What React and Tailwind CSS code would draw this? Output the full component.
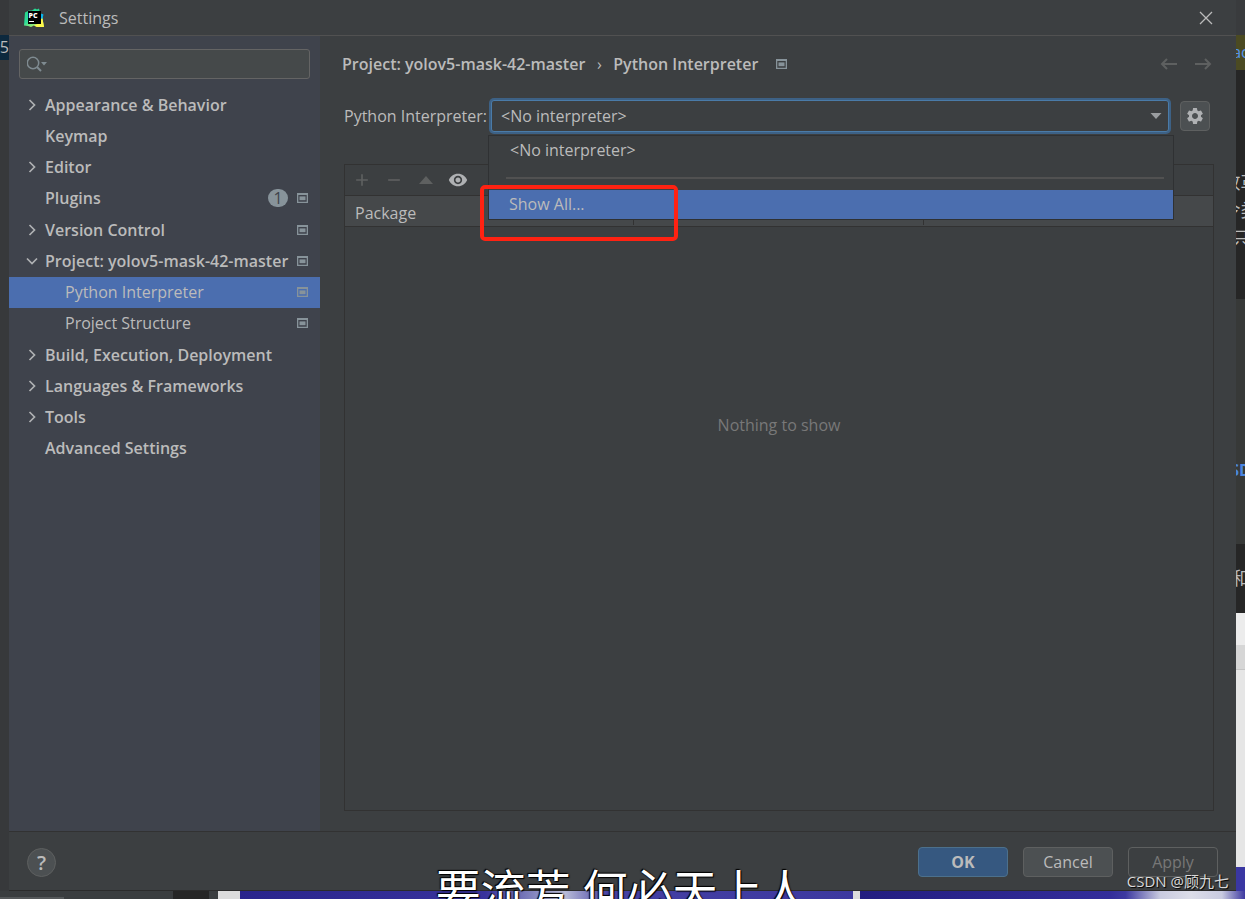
import { useState } from "react";
import { MdAdd, MdRemove, MdSettings, MdVisibility } from "react-icons/md";

const NAV_ITEMS = [
    { label: "Appearance & Behavior", arrow: "right" },
    { label: "Keymap" },
    { label: "Editor", arrow: "right" },
    { label: "Plugins", count: 1, project: true },
    { label: "Version Control", arrow: "right", project: true },
    { label: "Project: yolov5-mask-42-master", arrow: "down", project: true },
    { label: "Python Interpreter", child: true, project: true },
    { label: "Project Structure", child: true, project: true },
    { label: "Build, Execution, Deployment", arrow: "right" },
    { label: "Languages & Frameworks", arrow: "right" },
    { label: "Tools", arrow: "right" },
    { label: "Advanced Settings" },
];

function PyCharmLogo() {
    return (
        <svg viewBox="0 0 20 20" className="w-5 h-5 shrink-0" aria-hidden="true">
            <defs>
                <linearGradient id="pc-green" x1="0" y1="0" x2="0.6" y2="1">
                    <stop offset="0" stopColor="#21d789" />
                    <stop offset="0.6" stopColor="#2fdc9a" />
                    <stop offset="1" stopColor="#c8f060" />
                </linearGradient>
            </defs>
            <path d="M1 4.5 L5 2.5 L8 2.5 L11 0.5 L13 1.5 L15 0.5 L16 5 L19 6.5 L18.5 11 L20 19 L13 19 L10 17.5 L7 19 L4 18 L0 17.5 Z" fill="url(#pc-green)" />
            <path d="M16 5.5 L19.5 6.5 L18.3 11 L16 11 Z" fill="#07b3f2" />
            <path d="M16 11 L18.5 10.5 L20 19 L13 19 L10 17.5 L16 15 Z" fill="#fcf84a" />
            <rect x="4" y="3" width="13" height="13" fill="#000" />
            <text x="4.5" y="9.5" fontSize="7" fontWeight="800" fill="#fff" fontFamily="Open Sans, sans-serif">PC</text>
            <rect x="5" y="13" width="5" height="1" fill="#fff" />
        </svg>
    );
}

function ProjectIcon() {
    return (
        <svg viewBox="0 0 11 10" className="w-[11px] h-[10px] shrink-0" aria-hidden="true">
            <path fill="#87939a" fillRule="evenodd" d="M0 0H11V10H0Z M1.3 2V8.7H9.7V2Z" />
            <rect x="2.5" y="3.4" width="6" height="3.8" fill="#87939a" />
        </svg>
    );
}

function TreeArrow({ direction }) {
    return (
        <svg viewBox="0 0 12 12" className="w-3 h-3 mx-px" fill="none" stroke="#afb1b3" strokeWidth="1.7" aria-hidden="true">
            {direction === "right" ? <path d="M3.5 1L8.5 6L3.5 11" /> : <path d="M1 3.5L6 8.5L11 3.5" />}
        </svg>
    );
}

function NavItem({ item, selected, onSelect }) {
    return (
        <li className="grid">
            <button
                onClick={() => onSelect(item.label)}
                className={`flex items-center pr-3 text-left whitespace-nowrap ${item.child ? "pl-14" : "pl-4 font-semibold"} ${selected ? "bg-[#4b6eaf]" : ""}`}
            >
                {!item.child && (
                    <span className="w-5 shrink-0">
                        {item.arrow && <TreeArrow direction={item.arrow} />}
                    </span>
                )}
                <span className="flex-1">{item.label}</span>
                {item.count && (
                    <span className="w-5 h-[18px] mr-[9px] rounded-full bg-[#87939a] text-[#3f434c] text-base leading-[18px] font-normal text-center">
                        {item.count}
                    </span>
                )}
                {item.project && <ProjectIcon />}
            </button>
        </li>
    );
}

function Sidebar() {
    const [active, setActive] = useState("Python Interpreter");

    return (
        <nav className="w-[311px] shrink-0 bg-[#3f434c]" aria-label="Settings sections">
            <label className="flex items-center mx-[10px] mt-[13px] h-[30px] px-[7px] rounded-[3px] border border-[#646464] bg-[#45494a]">
                <svg viewBox="0 0 22 18" className="w-[22px] h-[18px] shrink-0" aria-hidden="true">
                    <circle cx="6" cy="8" r="5.7" fill="none" stroke="#7f8b91" strokeWidth="1.5" />
                    <path d="M10 12L14 16" stroke="#7f8b91" strokeWidth="2" />
                    <path d="M14 7H20L17 10.5Z" fill="#7f8b91" />
                </svg>
                <input type="text" aria-label="Search settings" className="flex-1 min-w-0 bg-transparent outline-none" />
            </label>
            <ul className="grid auto-rows-fr h-[375px] mt-[10px]">
                {NAV_ITEMS.map((item) => (
                    <NavItem key={item.label} item={item} selected={item.label === active} onSelect={setActive} />
                ))}
            </ul>
        </nav>
    );
}

function InterpreterSelect() {
    return (
        <div className="relative flex-1 h-9 p-[2px]">
            <select
                id="interpreter"
                className="w-full h-8 pl-[9px] rounded-[3px] border border-[#4a7ba8] ring-2 ring-[#3d6185] bg-[#3c3f41] appearance-none outline-none"
            >
                <option>&lt;No interpreter&gt;</option>
            </select>
            <svg viewBox="0 0 12 6" className="absolute right-[9px] top-[15px] w-3 h-[6px] pointer-events-none" aria-hidden="true">
                <path d="M0.5 0H11.5L6 6Z" fill="#9a9da0" />
            </svg>

            {/* opened list */}
            <div className="absolute z-10 top-[37px] left-[-1px] right-[-3px] border border-[#2f3133] bg-[#3c3f41]">
                <button className="block w-full h-[30px] pl-[21px] pb-[2px] text-left">&lt;No interpreter&gt;</button>
                <hr className="mt-[11px] mb-[11px] ml-[17px] mr-[9px] border-t-2 border-[#515151]" />
                <button className="block w-full h-[29px] pl-5 pb-[2px] text-left bg-[#4b6eaf]">Show All...</button>
            </div>

            <div className="absolute z-20 left-[-9px] top-[87px] w-[198px] h-[56px] rounded-[5px] border-4 border-[#ff2212] pointer-events-none" />
        </div>
    );
}

function PackagePanel() {
    return (
        <div className="flex flex-col flex-1 mt-[30px] mb-5 border border-[#323232]">
            <div className="flex items-center h-[30px] pl-[7px] gap-3 text-[#5e6060]">
                <button aria-label="Install"><MdAdd size={20} /></button>
                <button aria-label="Uninstall"><MdRemove size={20} /></button>
                <button aria-label="Upgrade" className="w-5 flex justify-center">
                    <svg viewBox="0 0 14 8" className="w-[14px] h-2"><path d="M0 8L7 0L14 8Z" fill="#5e6060" /></svg>
                </button>
                <button aria-label="Show early releases" className="text-[#afb1b3]"><MdVisibility size={20} /></button>
            </div>
            <table className="w-full table-fixed border-y border-[#323232] bg-[#45484a]">
                <thead>
                    <tr className="h-[31px]">
                        <th className="p-0 font-normal text-left">
                            <div className="h-7 pl-[10px] leading-8 border-r border-[#323232]">Package</div>
                        </th>
                        <th className="p-0" aria-label="Version">
                            <div className="h-7 border-r border-[#323232]" />
                        </th>
                        <th className="p-0" aria-label="Latest version" />
                    </tr>
                </thead>
            </table>
            <p className="pt-[186px] text-center text-[#787878]">Nothing to show</p>
        </div>
    );
}

function Content() {
    return (
        <main className="flex flex-col flex-1 min-w-0 pl-6 pr-[22px]">
            <div className="flex items-center justify-between h-14">
                <h1 className="flex items-center -ml-[2px] font-semibold">
                    <span>Project: yolov5-mask-42-master</span>
                    <span className="w-7 text-center font-normal">›</span>
                    <span className="mr-[18px]">Python Interpreter</span>
                    <ProjectIcon />
                </h1>
                <div className="flex gap-4 pr-[2px]">
                    <button aria-label="Back">
                        <svg viewBox="0 0 18 12" className="w-[18px] h-3" fill="none" stroke="#5e6060" strokeWidth="2" aria-hidden="true">
                            <path d="M17 6H2M7 1L2 6L7 11" />
                        </svg>
                    </button>
                    <button aria-label="Forward">
                        <svg viewBox="0 0 18 12" className="w-[18px] h-3" fill="none" stroke="#5e6060" strokeWidth="2" aria-hidden="true">
                            <path d="M1 6H16M11 1L16 6L11 11" />
                        </svg>
                    </button>
                </div>
            </div>
            <div className="flex items-center mt-[6px] pr-1">
                <label htmlFor="interpreter" className="w-[145px] whitespace-nowrap">Python Interpreter:</label>
                <InterpreterSelect />
                <button aria-label="Interpreter options" className="flex items-center justify-center w-[30px] h-[30px] ml-[9px] rounded-[4px] border border-[#5e6060] bg-[#4c5052] text-[#afb1b3]">
                    <MdSettings size={20} />
                </button>
            </div>
            <PackagePanel />
        </main>
    );
}

function Dialog() {
    return (
        <div className="flex flex-col flex-1 min-w-0 bg-[#3c3f41] border-b border-[#2b2b2b]">
            <header className="flex items-center h-9 pl-[15px] pr-[18px] border-b border-[#515151]">
                <PyCharmLogo />
                <span className="ml-[15px] flex-1">Settings</span>
                <button aria-label="Close" className="p-[5px]">
                    <svg viewBox="0 0 14 14" className="w-[14px] h-[14px]" stroke="#bbbbbb" strokeWidth="1.3" aria-hidden="true">
                        <path d="M1 1L13 13M13 1L1 13" />
                    </svg>
                </button>
            </header>
            <div className="flex flex-1">
                <Sidebar />
                <Content />
            </div>
            <footer className="flex items-center h-[59px] pl-[18px] pr-[18px] pt-[2px] gap-[15px] border-t border-[#323232]">
                <button aria-label="Help" className="w-[29px] h-[29px] mr-auto rounded-full border border-[#5e6060] bg-[#4c5052] text-xl leading-[27px] font-semibold">
                    ?
                </button>
                <button className="w-[90px] h-[30px] rounded-[4px] border border-[#4c708c] bg-[#365880] font-bold">OK</button>
                <button className="w-[90px] h-[30px] rounded-[4px] border border-[#5e6060] bg-[#4c5052]">Cancel</button>
                <button disabled className="w-[90px] h-[30px] rounded-[4px] border border-[#5e6060] text-[#777777]">Apply</button>
            </footer>
        </div>
    );
}

// Slivers of the windows that sit behind the dialog
function LeftEdge() {
    return (
        <div className="w-[9px] shrink-0 overflow-hidden bg-[#37393b]">
            <div className="flex justify-end h-[25px] mt-[35px] bg-[#0d293e] leading-6">v5</div>
        </div>
    );
}

function RightEdge() {
    return (
        <div className="flex flex-col w-[9px] shrink-0 overflow-hidden whitespace-nowrap text-lg">
            <div className="h-[35px] bg-[#393b3d]" />
            <div className="flex justify-center h-[35px] bg-[#4b4a22] text-base leading-[35px] text-[#5394ec]">ac</div>
            <div className="h-[229px] pt-[98px] bg-[#262626] leading-7">
                <div className="flex justify-center">改革</div>
                <div className="flex justify-center">令类</div>
                <div className="flex justify-center">只</div>
            </div>
            <div className="flex items-end justify-center h-[245px] pb-[60px] bg-[#373938] text-base leading-7 font-bold text-[#4a86e0]">SD</div>
            <div className="flex justify-center h-[69px] bg-[#262626] leading-[69px]">和</div>
            <div className="h-8 bg-[#ececec]" />
            <div className="h-[25px] border-b border-[#c4c4c4] bg-[#d6d6d6]" />
            <div className="flex-1 bg-[#e6e6e6]" />
            <div className="h-6 bg-[#3a37a2]" />
        </div>
    );
}

function BottomEdge() {
    return (
        <div className="flex h-2 shrink-0 bg-[#3a3d3f]">
            <div className="w-16 mt-[6px] bg-[#55585a]" />
            <div className="w-9 ml-[109px] bg-[#262626]" />
            <div className="w-[22px] ml-[9px] bg-[#dcdcdc]" />
            <div className="w-[613px] bg-[linear-gradient(90deg,#29248c_0%,#38329c_40%,#8f92c4_49%,#b9bcd8_53%,#4540a4_60%,#3c389f_100%)]" />
            <div className="w-[7px] bg-[#dcdcdc]" />
            <div className="flex-1 bg-[linear-gradient(90deg,#231d80_0%,#332d9a_65%,#3d39a0_69%,#c9cbe0_78%,#dcdde8_86%,#c9cbe0_94%,#3d39a0_100%)]" />
        </div>
    );
}

export default function App() {
    return (
        <div className="relative flex flex-col min-h-screen overflow-hidden bg-[#3c3f41] text-base leading-6 text-[#bbbbbb] font-['Open_Sans','Noto_Sans_CJK_SC',sans-serif]">
            <div className="flex flex-1">
                <LeftEdge />
                <Dialog />
                <RightEdge />
            </div>
            <BottomEdge />

            <p className="absolute z-30 left-[35%] bottom-[-20px] text-[45px] leading-[56px] whitespace-nowrap text-white [text-shadow:0_0_2px_#000,1px_1px_1px_#000,-1px_-1px_1px_#000]">
                要流芳 何必天上人
            </p>
            <p className="absolute z-30 right-4 bottom-2 text-[15px] leading-5 whitespace-nowrap text-[#d8d8d8] [text-shadow:1px_1px_1px_#000]">
                CSDN @顾九七
            </p>
        </div>
    );
}
